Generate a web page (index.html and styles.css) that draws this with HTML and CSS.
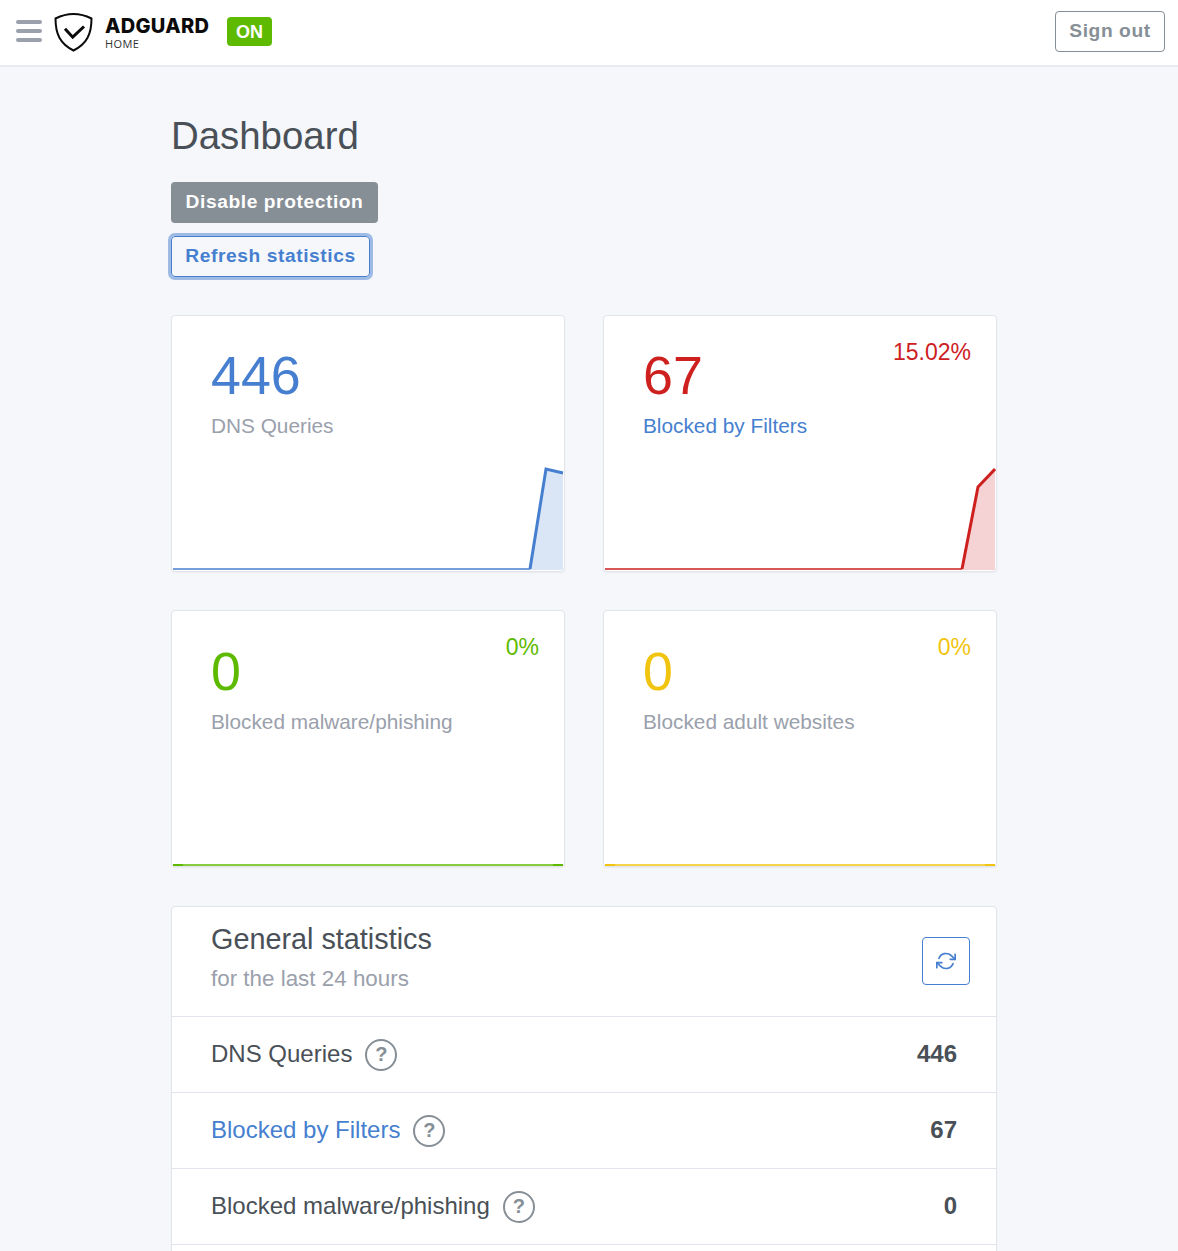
FILE: index.html
```html
<!DOCTYPE html>
<html lang="en">
<head>
    <meta charset="UTF-8">
    <meta name="viewport" content="width=device-width, initial-scale=1.0">
    <title>AdGuard Home</title>
    <link rel="stylesheet" href="styles.css">
</head>
<body>

    <!-- Top bar -->
    <header class="topbar">
        <div class="menu-icon"><span></span><span></span><span></span></div>
        <svg class="shield" width="40" height="40" viewBox="0 0 40 40" fill="none" stroke="#0b0b0b">
            <path d="M19.5 2 C13 2 6.5 4 1.5 6.5 C1.5 22 6 31.5 19.5 38.5 C33 31.5 37.5 22 37.5 6.5 C32.5 4 26 2 19.5 2 Z" stroke-width="2"/>
            <path d="M11 16.8 L18.7 25.2 L30 14.5" stroke-width="3"/>
        </svg>
        <div class="brand">
            <div class="brand-name">ADGUARD</div>
            <div class="brand-sub">HOME</div>
        </div>
        <span class="badge-on">ON</span>
        <button class="btn btn-signout">Sign out</button>
    </header>

    <main class="page">
        <h1 class="page-title">Dashboard</h1>
        <div class="actions">
            <button class="btn btn-disable">Disable protection</button>
            <button class="btn btn-refresh">Refresh statistics</button>
        </div>

        <!-- Counter cards -->
        <section class="counters">
            <div class="card counter">
                <div class="counter-num blue">446</div>
                <div class="counter-label">DNS Queries</div>
                <svg class="spark" width="392" height="112" viewBox="0 0 392 112">
                    <path d="M1 111 H358 L374 9 L391 13 V111 Z" fill="#dae6f6"/>
                    <path d="M1 110 H358" fill="none" stroke="#467fcf" stroke-width="1.5"/>
                    <path d="M358 110 L374 10 L391 14" fill="none" stroke="#467fcf" stroke-width="3"/>
                </svg>
            </div>
            <div class="card counter">
                <span class="counter-pct red">15.02%</span>
                <div class="counter-num red">67</div>
                <div class="counter-label blue">Blocked by Filters</div>
                <svg class="spark" width="392" height="112" viewBox="0 0 392 112">
                    <path d="M1 111 H358 L374 28 L391 9 V111 Z" fill="#f5d2d3"/>
                    <path d="M1 110 H358" fill="none" stroke="#cd201f" stroke-width="1.5"/>
                    <path d="M358 110 L374 28 L391 10" fill="none" stroke="#cd201f" stroke-width="3"/>
                </svg>
            </div>
            <div class="card counter counter-low">
                <span class="counter-pct green">0%</span>
                <div class="counter-num green">0</div>
                <div class="counter-label">Blocked malware/phishing</div>
                <svg class="spark" width="392" height="112" viewBox="0 0 392 112">
                    <path d="M1 111 H391" fill="none" stroke="#5eba00" stroke-width="2" stroke-opacity="0.75"/>
                    <path d="M1 111 H11 M381 111 H391" fill="none" stroke="#5eba00" stroke-width="2"/>
                </svg>
            </div>
            <div class="card counter counter-low">
                <span class="counter-pct yellow">0%</span>
                <div class="counter-num yellow">0</div>
                <div class="counter-label">Blocked adult websites</div>
                <svg class="spark" width="392" height="112" viewBox="0 0 392 112">
                    <path d="M1 111 H391" fill="none" stroke="#f1c40f" stroke-width="2" stroke-opacity="0.75"/>
                    <path d="M1 111 H11 M381 111 H391" fill="none" stroke="#f1c40f" stroke-width="2"/>
                </svg>
            </div>
        </section>

        <!-- General statistics table -->
        <section class="card stats">
            <div class="stats-head">
                <div>
                    <div class="stats-title">General statistics</div>
                    <div class="stats-sub">for the last 24 hours</div>
                </div>
                <button class="btn-reload">
                    <svg width="20" height="20" viewBox="0 0 24 24" fill="none" stroke="#467fcf" stroke-width="2" stroke-linecap="round" stroke-linejoin="round">
                        <polyline points="23 4 23 10 17 10"/>
                        <polyline points="1 20 1 14 7 14"/>
                        <path d="M3.51 9a9 9 0 0 1 14.85-3.36L23 10M1 14l4.64 4.36A9 9 0 0 0 20.49 15"/>
                    </svg>
                </button>
            </div>
            <div class="stats-row">
                <span class="row-text">DNS Queries</span><span class="help">?</span>
                <strong class="row-text">446</strong>
            </div>
            <div class="stats-row">
                <span class="row-text blue">Blocked by Filters</span><span class="help">?</span>
                <strong class="row-text">67</strong>
            </div>
            <div class="stats-row">
                <span class="row-text">Blocked malware/phishing</span><span class="help">?</span>
                <strong class="row-text">0</strong>
            </div>
        </section>
    </main>

</body>
</html>
```

FILE: styles.css
```css
body {
    margin: 0;
    background-color: #f5f7fb;
    color: #495057;
    font-family: 'Liberation Sans', Arial, sans-serif;
    font-size: 20px;
}

.blue { color: #467fcf; }
.red { color: #cd201f; }
.green { color: #5eba00; }
.yellow { color: #f1c40f; }

/* Top bar */
.topbar {
    display: flex;
    align-items: center;
    height: 65px;
    padding: 0 13px 0 16px;
    background-color: #fff;
    border-bottom: 2px solid #e8ebf3;
}

.menu-icon {
    display: flex;
    flex-direction: column;
    gap: 5px;
    width: 26px;
    margin-top: -3px;
}

.menu-icon span {
    height: 4px;
    border-radius: 2px;
    background-color: #9aa0ac;
}

.shield {
    margin: -2px 0 0 12px;
}

.brand {
    margin-left: 11px;
    margin-top: -1px;
    color: #0b0b0b;
}

.brand-name {
    font-family: 'Inter', sans-serif;
    font-weight: 800;
    font-size: 20px;
    line-height: 22px;
    letter-spacing: 0.3px;
    width: 104px;
    white-space: nowrap;
}

.brand-sub {
    font-family: 'Open Sans', sans-serif;
    font-size: 11px;
    line-height: 13px;
    color: #333;
    letter-spacing: 0.4px;
}

.badge-on {
    margin-left: 18px;
    margin-top: -2px;
    padding: 0 9px;
    height: 29px;
    line-height: 30px;
    border-radius: 4px;
    background-color: #5eba00;
    color: #fff;
    font-weight: bold;
    font-size: 18px;
}

.btn {
    font-family: 'Liberation Sans', Arial, sans-serif;
    font-weight: bold;
    font-size: 19.2px;
    letter-spacing: 0.58px;
    border-radius: 4px;
    background-color: transparent;
    cursor: pointer;
}

.btn-signout {
    margin-left: auto;
    width: 110px;
    height: 41px;
    padding: 0 0 2px;
    margin-top: -2px;
    border: 1px solid #868e96;
    color: #868e96;
}

/* Page */
.page {
    height: 1184px;
    padding: 0 181px 0 171px;
    overflow: hidden;
}

.page-title {
    margin: 0;
    padding-top: 46px;
    font-size: 38.4px;
    font-weight: normal;
    line-height: 46px;
}

.actions {
    display: flex;
    flex-direction: column;
    align-items: flex-start;
    gap: 13px;
    margin-top: 23px;
}

.btn-disable {
    width: 207px;
    height: 41px;
    padding: 0 0 2px;
    border: none;
    background-color: #868e96;
    color: #fff;
}

.btn-refresh {
    width: 199px;
    height: 41px;
    padding: 0 0 2px;
    border: 1px solid #467fcf;
    color: #467fcf;
    box-shadow: 0 0 0 3px rgba(70, 127, 207, 0.5);
}

/* Cards */
.card {
    background-color: #fff;
    border: 1px solid #e3e5ec;
    border-radius: 4px;
    box-shadow: 0 1px 2px rgba(0, 0, 0, 0.05);
}

.counters {
    display: grid;
    grid-template-columns: 394px 394px;
    gap: 38px;
    margin-top: 38px;
}

.counter {
    position: relative;
    display: flex;
    flex-direction: column;
    height: 255px;
}

.counter-num {
    margin: 29px 0 0 39px;
    font-size: 53.8px;
    line-height: 60px;
}

.counter-low .counter-num {
    margin-top: 30px;
}

.counter-label {
    margin: 6px 0 0 39px;
    font-size: 20.8px;
    line-height: 30px;
    color: #9aa0ac;
}

.counter-label.blue { color: #467fcf; }

.counter-pct {
    position: absolute;
    top: 23px;
    right: 25px;
    font-size: 23px;
}

.spark {
    margin-top: auto;
    display: block;
}

/* General statistics */
.stats {
    margin-top: 39px;
    height: 400px;
}

.stats-head {
    display: flex;
    justify-content: space-between;
    align-items: center;
    height: 109px;
    padding: 0 26px 0 39px;
    border-bottom: 1px solid #e3e5ec;
}

.stats-title {
    font-size: 28.8px;
    line-height: 34px;
    margin-top: -8px;
}

.stats-sub {
    font-size: 22.4px;
    line-height: 30px;
    margin-top: 8px;
    color: #9aa0ac;
}

.btn-reload {
    display: flex;
    align-items: center;
    justify-content: center;
    width: 48px;
    height: 48px;
    padding: 0;
    margin-top: -2px;
    background-color: transparent;
    border: 1px solid #467fcf;
    border-radius: 4px;
}

.stats-row {
    display: flex;
    align-items: center;
    height: 75px;
    padding: 0 39px;
    border-bottom: 1px solid #e3e5ec;
    font-size: 24px;
}

.row-text {
    margin-bottom: 2px;
}

.stats-row strong {
    margin-left: auto;
}

.help {
    display: flex;
    align-items: center;
    justify-content: center;
    width: 28px;
    height: 28px;
    margin-left: 13px;
    border: 2px solid #868e96;
    border-radius: 50%;
    color: #868e96;
    font-size: 20px;
    font-weight: bold;
}
```
